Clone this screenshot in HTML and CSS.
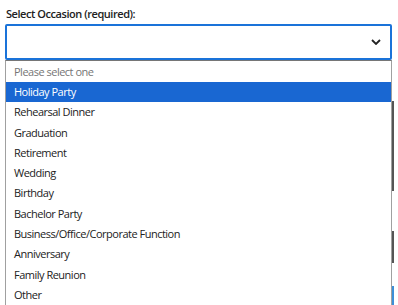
FILE: index.html
```html
<!DOCTYPE html>
<html lang="en">

<head>
    <meta charset="UTF-8">
    <meta name="viewport" content="width=device-width, initial-scale=1.0">
    <title>Select Occasion</title>
    <link rel="stylesheet" href="styles.css">
</head>

<body>

    <main class="form">
        <div class="field">
            <label class="field-label" for="occasion">Select Occasion (required):</label>
            <div class="select-wrap">
                <div class="select-box" id="occasion">
                    <svg class="chevron" width="10" height="6" viewBox="0 0 10 6">
                        <path d="M1 1 L5 5 L9 1" fill="none" stroke="#222" stroke-width="1.8"/>
                    </svg>
                </div>

                <ul class="options">
                    <li class="placeholder">Please select one</li>
                    <li class="active">Holiday Party</li>
                    <li>Rehearsal Dinner</li>
                    <li>Graduation</li>
                    <li>Retirement</li>
                    <li>Wedding</li>
                    <li>Birthday</li>
                    <li>Bachelor Party</li>
                    <li>Business/Office/Corporate Function</li>
                    <li>Anniversary</li>
                    <li>Family Reunion</li>
                    <li>Other</li>
                </ul>
            </div>
        </div>

        <!-- fields underneath the open list -->
        <div class="under">
            <div class="under-box dark-a"></div>
            <div class="under-box dark-b"></div>
            <div class="under-box blue"></div>
        </div>
    </main>

</body>

</html>
```

FILE: styles.css
```css
body {
    margin: 0;
    font-family: "Open Sans", Lato, Arial, sans-serif;
    color: #222222;
    background: #ffffff;
    overflow: hidden;
}

.form {
    padding: 5px 6px 0 5px;
}

.field-label {
    display: block;
    font-size: 11px;
    font-weight: 600;
    letter-spacing: -0.45px;
    line-height: 15px;
    padding: 1px 0 0 1px;
    margin-bottom: 3px;
}

.select-wrap {
    position: relative;
}

.select-box {
    height: 32px;
    border: 2px solid #1a73d9;
    border-radius: 2px;
    display: flex;
    align-items: center;
    justify-content: flex-end;
    padding-right: 9px;
}

.options {
    position: absolute;
    z-index: 2;
    top: 36px;
    left: 0;
    right: 0;
    margin: 0;
    padding: 0;
    list-style: none;
    background: #ffffff;
    border: 1px solid #a0a0a0;
    border-top-color: #767676;
    font-size: 11px;
    letter-spacing: -0.5px;
}

.options li {
    height: 20.3px;
    line-height: 20.3px;
    padding-left: 8px;
    white-space: nowrap;
}

.options .placeholder {
    height: 21px;
    line-height: 22px;
    color: #757575;
}

.options .active {
    background: #1967d2;
    color: #ffffff;
}

.under {
    display: flex;
    flex-direction: column;
    margin-top: 5px;
}

.under-box {
    border-right: 2px solid #555555;
    margin-right: -2px;
}

.dark-a {
    height: 90px;
    margin-top: 36px;
}

.dark-b {
    height: 32px;
    margin-top: 40px;
}

.blue {
    height: 30px;
    margin-top: 23px;
    border-right-color: #3d8fd8;
}
```
